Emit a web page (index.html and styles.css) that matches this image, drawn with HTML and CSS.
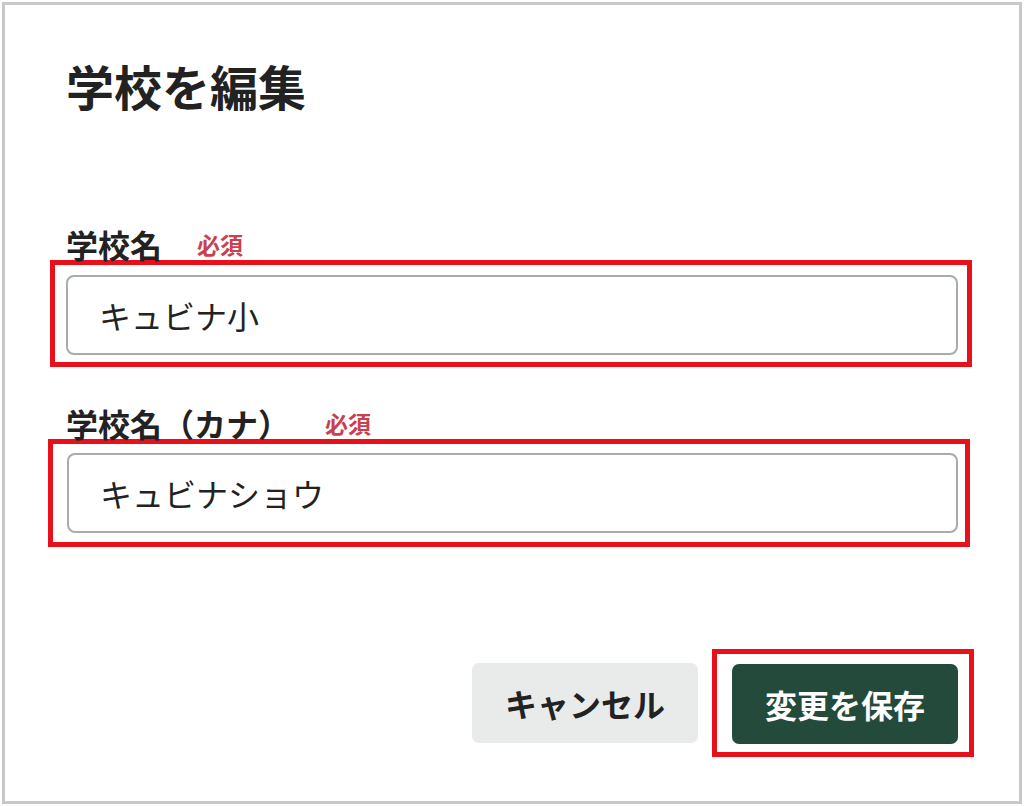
FILE: index.html
```html
<!DOCTYPE html>
<html lang="ja">
<head>
<meta charset="utf-8">
<title>学校を編集</title>
<link rel="stylesheet" href="styles.css">
</head>
<body>
<div class="frame">
  <h1 class="title">学校を編集</h1>

  <div class="field field--first">
    <div class="label-row">
      <span class="label">学校名</span>
      <span class="required">必須</span>
    </div>
    <div class="highlight highlight--one">
      <input class="text-input" type="text" value="キュビナ小">
    </div>
  </div>

  <div class="field field--second">
    <div class="label-row">
      <span class="label">学校名（カナ）</span>
      <span class="required">必須</span>
    </div>
    <div class="highlight highlight--two">
      <input class="text-input" type="text" value="キュビナショウ">
    </div>
  </div>

  <div class="actions">
    <button class="btn btn--cancel" type="button">キャンセル</button>
    <div class="highlight highlight--three">
      <button class="btn btn--save" type="button">変更を保存</button>
    </div>
  </div>
</div>
</body>
</html>
```

FILE: styles.css
```css
* {
  box-sizing: border-box;
}

html, body {
  margin: 0;
  padding: 0;
  background: #ffffff;
}

body {
  font-family: "Noto Sans CJK JP", "Noto Sans", sans-serif;
  color: #222222;
}

.frame {
  margin: 2px;
  width: 1020px;
  height: 802px;
  border: 3px solid #c8c8c8;
  padding: 56px 47px 0 45px;
  background: #ffffff;
}

.title {
  margin: 0 0 0 16px;
  font-size: 48px;
  line-height: 1;
  font-weight: 700;
  color: #222222;
}

.field--first {
  margin-top: 119px;
}

.field--second {
  margin-top: 40px;
}

.label-row {
  display: flex;
  align-items: center;
  margin-left: 16px;
  height: 32px;
}

.label {
  font-size: 32px;
  line-height: 1;
  font-weight: 700;
  color: #222222;
}

.required {
  margin-left: 35px;
  font-size: 23px;
  line-height: 1;
  font-weight: 700;
  color: #c9404f;
}

.highlight {
  border: 5px solid #e8101a;
}

.highlight--one {
  padding: 10px 9px 7px 11px;
}

.highlight--two {
  margin: 0 2px 0 -2px;
  padding: 9px 7px 9px 14px;
}

.highlight--three {
  padding: 10px 11px 8px 15px;
}

.text-input {
  display: block;
  width: 100%;
  height: 80px;
  border: 2px solid #a7adad;
  border-radius: 8px;
  padding: 0 0 0 31px;
  font-family: "Noto Sans CJK JP", "Noto Sans", sans-serif;
  font-size: 32px;
  color: #222222;
  background: #ffffff;
  outline: none;
}

.actions {
  display: flex;
  justify-content: flex-end;
  align-items: center;
  gap: 14px;
  margin: 102px -2px 0 0;
}

.btn {
  width: 226px;
  height: 80px;
  border: none;
  border-radius: 7px;
  font-family: "Noto Sans CJK JP", "Noto Sans", sans-serif;
  font-size: 32px;
  font-weight: 700;
  line-height: 1;
  padding: 0;
  cursor: pointer;
}

.btn--cancel {
  background: #e9eaea;
  color: #222222;
}

.btn--save {
  display: block;
  background: #244a3b;
  color: #ffffff;
}
```
